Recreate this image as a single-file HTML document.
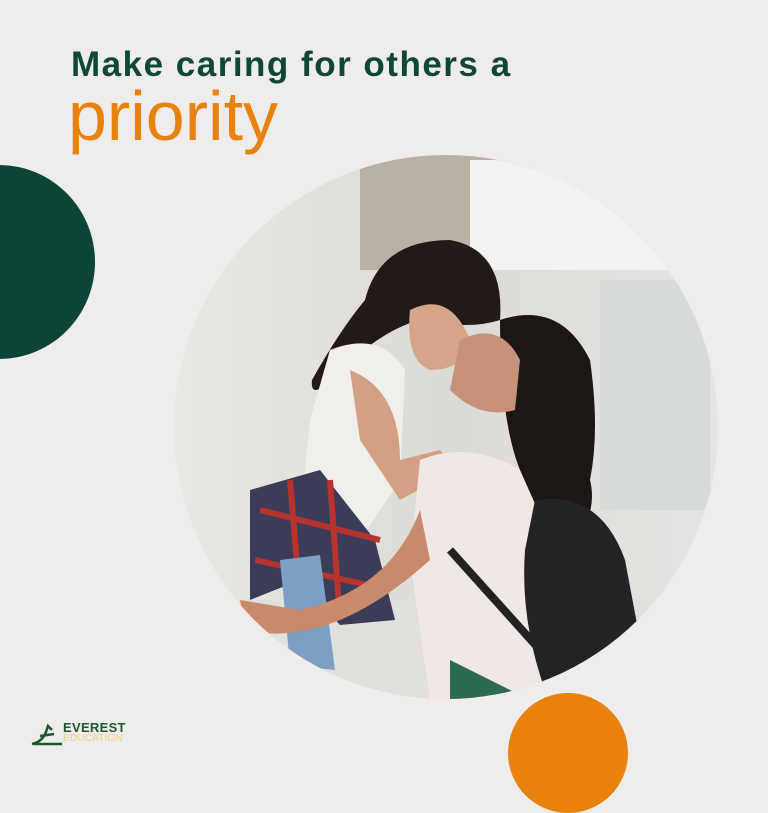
<!DOCTYPE html>
<html><head><style>
html,body{margin:0;padding:0;}
body{width:768px;height:768px;background:#eeedeb;position:relative;overflow:hidden;font-family:"Liberation Sans",sans-serif;}
.t1{position:absolute;left:71px;top:47px;font-size:35px;line-height:1;font-weight:bold;color:#0e4637;letter-spacing:1.5px;white-space:nowrap;}
.t2{position:absolute;left:68px;top:81px;font-size:70px;line-height:1;color:#e8820c;white-space:nowrap;}
.g{position:absolute;left:-97px;top:165px;width:192px;height:194px;border-radius:50%;background:#0c4535;}
.o{position:absolute;left:508px;top:693px;width:120px;height:120px;border-radius:50%;background:#e8820c;}
.logo{position:absolute;left:30px;top:720px;}
</style></head><body>
<div class="t1">Make caring for others a</div>
<div class="t2">priority</div>
<div class="g"></div>
<div class="o"></div>
<svg style="position:absolute;left:0;top:0" width="768" height="768">
<defs>
<clipPath id="c"><circle cx="446" cy="427" r="272"/></clipPath>
<linearGradient id="bg" x1="0" y1="0" x2="1" y2="0">
<stop offset="0" stop-color="#e9e8e4"/><stop offset="0.5" stop-color="#dcdad4"/><stop offset="1" stop-color="#e4e6e4"/></linearGradient>
</defs>
<g clip-path="url(#c)">
<rect x="170" y="150" width="560" height="560" fill="url(#bg)"/>
<rect x="360" y="150" width="170" height="120" fill="#b8b2a6"/>
<rect x="470" y="160" width="200" height="110" fill="#f2f2f0"/>
<rect x="600" y="280" width="110" height="230" fill="#d8dcd8"/>
<rect x="170" y="600" width="560" height="110" fill="#e2e0dc"/>
<path d="M365 300 Q380 240 450 240 Q505 250 500 320 Q470 330 420 320 Q380 330 330 380 Q310 400 312 380 Q340 330 365 300Z" fill="#221a16"/>
<path d="M410 310 Q450 290 470 340 Q465 370 430 370 Q405 360 410 310Z" fill="#d6a488"/>
<path d="M330 350 Q380 330 405 370 L400 480 L360 540 L300 520 L310 420Z" fill="#f1efec"/>
<path d="M350 370 Q400 390 400 460 L440 450 L455 470 L400 500 L360 440Z" fill="#d4a083"/>
<path d="M250 490 L320 470 L375 540 L395 620 L340 625 L300 580 L250 600Z" fill="#3a3c58"/>
<path d="M260 510 L380 540 M255 560 L390 590 M290 480 L300 600 M330 480 L340 620" stroke="#b8322e" stroke-width="6"/>
<path d="M280 560 L320 555 L335 670 L290 665Z" fill="#7c9fc4"/>
<path d="M500 320 Q560 300 590 360 Q600 430 590 480 Q600 520 560 560 Q530 530 520 470 Q500 420 500 320Z" fill="#1c1614"/>
<path d="M460 340 Q500 320 520 360 L515 410 Q480 420 450 390Z" fill="#c8917a"/>
<path d="M420 460 Q470 440 520 470 L560 560 L540 700 L430 700 L410 560Z" fill="#efe8e4"/>
<path d="M420 510 Q390 590 300 610 L240 600 L245 630 Q330 650 430 560Z" fill="#c88a6c"/>
<path d="M535 500 Q600 490 625 560 L640 640 Q600 680 545 690 Q520 620 525 550Z" fill="#222325"/>
<path d="M450 550 L540 650" stroke="#222" stroke-width="8"/>
<path d="M450 660 L530 700 L450 720Z" fill="#2c6a52"/>
</g>
</svg>
<div class="logo">
<svg width="34" height="26" style="position:absolute;left:0;top:2px"><path d="M2 22 Q12 20 16 10 L18 4 L22 8 M10 14 L24 12 M4 22 L32 22" stroke="#1a5a2c" stroke-width="2.5" fill="none"/></svg>
<div style="position:absolute;left:33px;top:0;font-size:13px;font-weight:bold;color:#1a5a2c;letter-spacing:0.3px">EVEREST</div>
<div style="position:absolute;left:33px;top:13px;font-size:10px;color:#f2cf7a;letter-spacing:0.2px">EDUCATION</div>
</div>
</body></html>
